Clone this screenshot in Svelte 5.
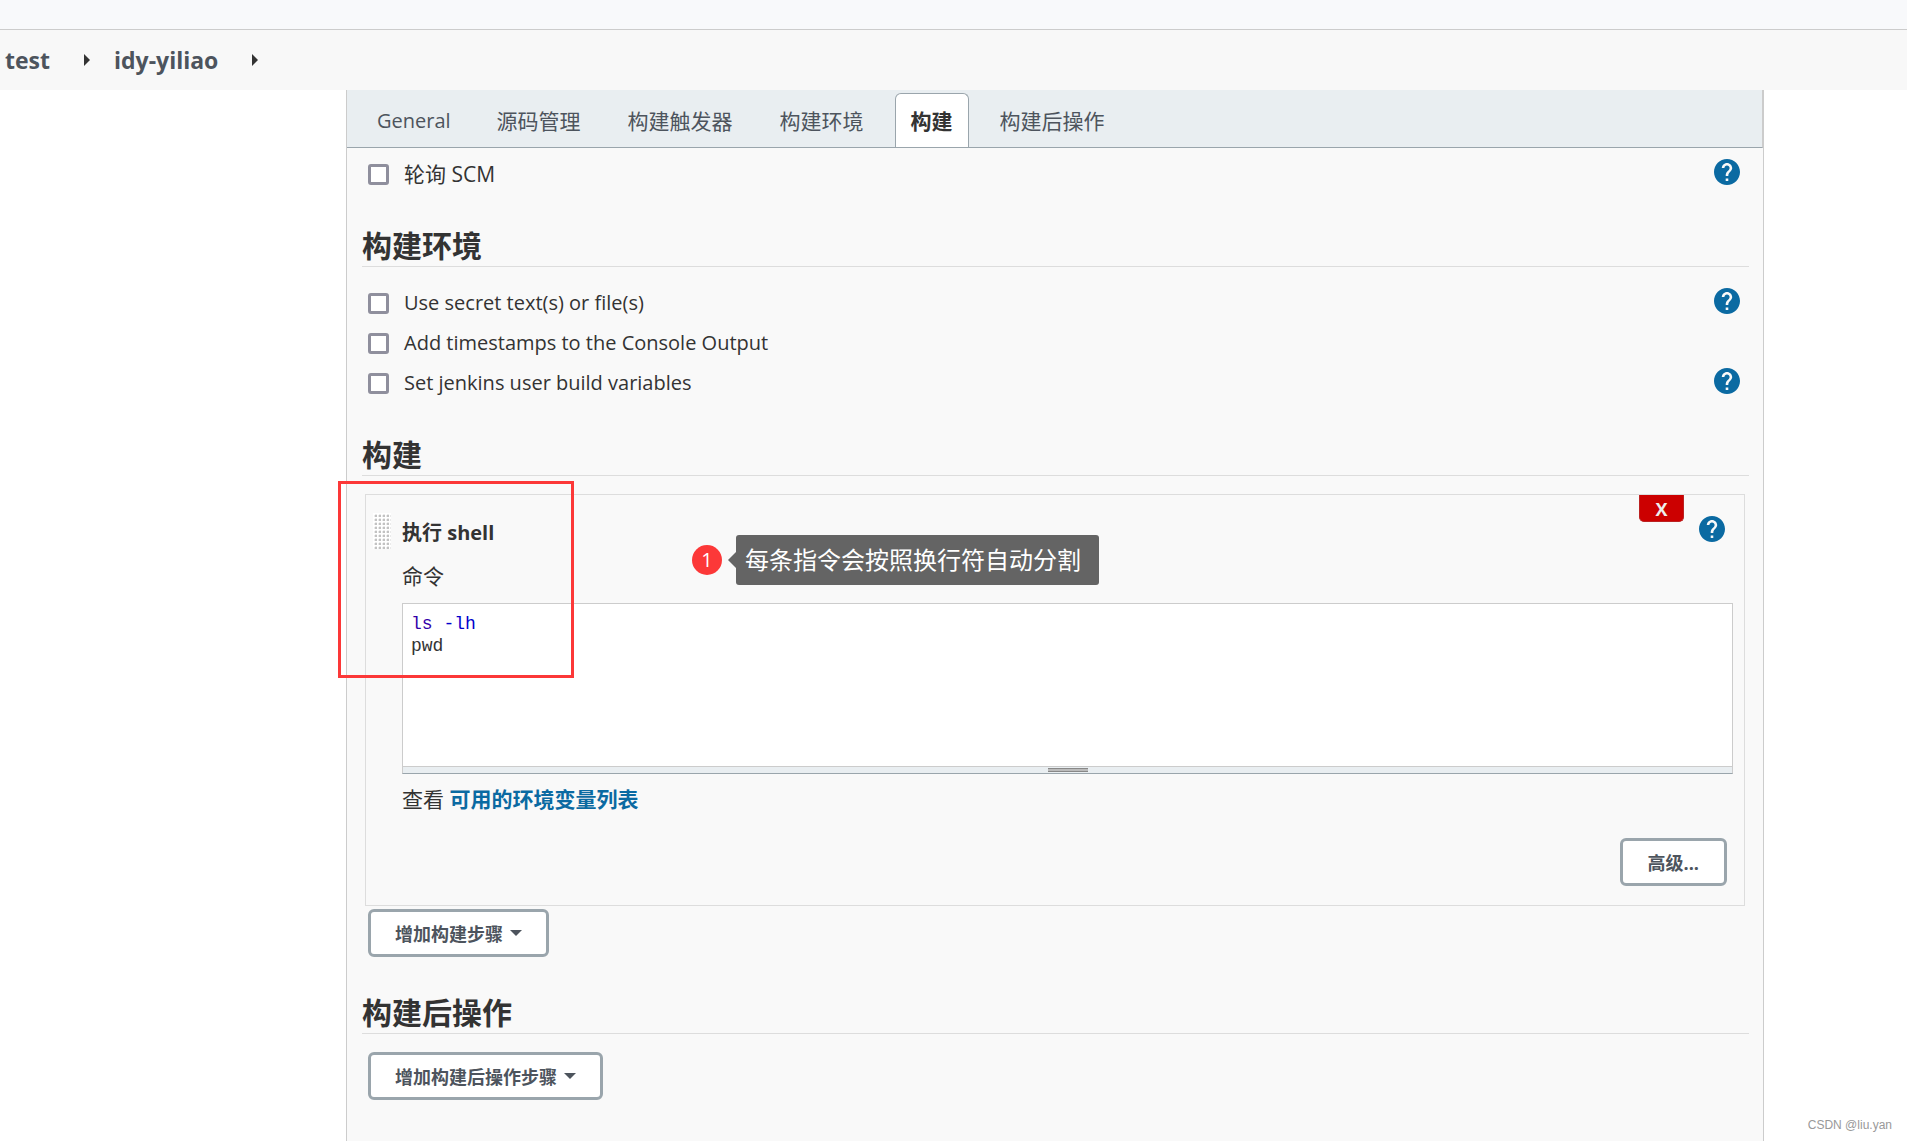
<script lang="ts">
  type Option = { id: string; label: string; help: boolean };

  const tabs = ['General', '源码管理', '构建触发器', '构建环境', '构建', '构建后操作'];
  let activeTab = $state('构建');

  const triggers: Option[] = [{ id: 'scm', label: '轮询 SCM', help: true }];

  const wrappers: Option[] = [
    { id: 'secrets', label: 'Use secret text(s) or file(s)', help: true },
    { id: 'timestamps', label: 'Add timestamps to the Console Output', help: false },
    { id: 'user-vars', label: 'Set jenkins user build variables', help: true },
  ];

  let checked: Record<string, boolean> = $state({});
  let command = $state('ls -lh\npwd');

  // splits the script into coloured tokens for the layer under the textarea
  const highlight = (text: string) =>
    text.split(/(\s+)/).map((value) => {
      if (value === 'ls') return { value, kind: 'builtin' };
      if (value.startsWith('-')) return { value, kind: 'attribute' };
      return { value, kind: 'plain' };
    });

  let tokens = $derived(highlight(command));
</script>

{#snippet helpButton(name: string)}
  <button type="button" class="help" aria-label={`Help for ${name}`}>
    <svg viewBox="2 2 20 20" width="26" height="26" aria-hidden="true">
      <path
        d="M12 2C6.48 2 2 6.48 2 12s4.48 10 10 10 10-4.48 10-10S17.52 2 12 2zm1 17h-2v-2h2v2zm2.07-7.75l-.9.92C13.45 12.9 13 13.5 13 15h-2v-.5c0-1.1.45-2.1 1.17-2.83l1.24-1.26c.37-.36.59-.86.59-1.41 0-1.1-.9-2-2-2s-2 .9-2 2H8c0-2.21 1.79-4 4-4s4 1.79 4 4c0 .88-.36 1.68-.93 2.25z"
      />
    </svg>
  </button>
{/snippet}

{#snippet optionRow(option: Option)}
  <div class="row">
    <input type="checkbox" id={option.id} bind:checked={checked[option.id]} />
    <label for={option.id}>{option.label}</label>
    {#if option.help}
      {@render helpButton(option.label)}
    {/if}
  </div>
{/snippet}

<div class="page">
  <header></header>

  <nav class="breadcrumbs">
    <a href="#test">test</a>
    <span class="arrow"></span>
    <a href="#idy-yiliao">idy-yiliao</a>
    <span class="arrow"></span>
  </nav>

  <main>
    <div class="tabBar">
      {#each tabs as tab}
        <button type="button" class="tab" class:active={activeTab === tab} onclick={() => (activeTab = tab)}>
          {tab}
        </button>
      {/each}
    </div>

    <form>
      <section class="first">
        {#each triggers as option}
          {@render optionRow(option)}
        {/each}
      </section>

      <h2>构建环境</h2>
      <section class="options">
        {#each wrappers as option}
          {@render optionRow(option)}
        {/each}
      </section>

      <h2>构建</h2>
      <section class="steps">
        <div class="step">
          <button type="button" class="delete" aria-label="Delete step">X</button>

          <div class="stepTitle">
            <span class="grip"></span>
            <b>执行 shell</b>
            {@render helpButton('执行 shell')}
          </div>

          <label class="fieldLabel" for="command">命令</label>
          <div class="editor">
            <pre aria-hidden="true">{#each tokens as token}<span class={token.kind}>{token.value}</span>{/each}</pre>
            <textarea id="command" spellcheck="false" bind:value={command}></textarea>
            <div class="resizer"><span></span></div>
          </div>

          <p class="hint">查看 <a href="#env-vars">可用的环境变量列表</a></p>

          <div class="advanced">
            <button type="button" class="btn">高级...</button>
          </div>

          <div class="marker"></div>
          <div class="callout">
            <span class="number">1</span>
            <span class="bubble">每条指令会按照换行符自动分割</span>
          </div>
        </div>

        <button type="button" class="btn menu">增加构建步骤<span class="caret"></span></button>
      </section>

      <h2>构建后操作</h2>
      <section class="steps">
        <button type="button" class="btn menu">增加构建后操作步骤<span class="caret"></span></button>
      </section>
    </form>
  </main>

  <span class="watermark">CSDN @liu.yan</span>
</div>

<style>
  :global(body) {
    background: #fff;
  }

  .page {
    position: relative;
    display: flex;
    flex-direction: column;
    min-height: 100vh;
    color: #333;
    font-family: 'Open Sans', 'Noto Sans CJK SC', sans-serif;
    font-size: 20px;
  }

  .page * {
    box-sizing: border-box;
  }

  button {
    font-family: inherit;
    cursor: pointer;
  }

  header {
    height: 30px;
    background: #f8f9fb;
    border-bottom: 1px solid #ccc;
  }

  .breadcrumbs {
    display: flex;
    align-items: center;
    height: 60px;
    padding-left: 5px;
    background: #f8f8f8;
    font-size: 23px;
    font-weight: bold;
  }

  .breadcrumbs a {
    color: #4d545d;
    text-decoration: none;
  }

  .arrow {
    margin: 0 24px 0 34px;
    border: 6px solid transparent;
    border-left-color: #333;
    border-right-width: 0;
  }

  main {
    flex: 1;
    margin: 0 143px 0 346px;
    background: #f9f9f9;
    border: solid #ccc;
    border-width: 0 1px;
  }

  .tabBar {
    display: flex;
    align-items: flex-end;
    gap: 15px;
    height: 58px;
    padding-left: 15px;
    background: #e9eef1;
    border-right: 1px solid #ccc;
    border-bottom: 1px solid #9aa5ac;
  }

  .tab {
    height: 54px;
    padding: 0 15px 2px;
    border: 1px solid transparent;
    border-bottom: 0;
    border-radius: 6px 6px 0 0;
    background: none;
    color: #4d545d;
    font-size: 21px;
  }

  .tab:first-child {
    padding: 0 14px;
    font-size: 20px;
  }

  .tab.active {
    border-color: #9aa5ac;
    background: #fff;
    color: #333;
    font-weight: bold;
  }

  form {
    padding: 0 14px 40px 15px;
  }

  .first {
    padding-top: 6px;
    font-size: 21px;
  }

  .options {
    padding-top: 16px;
  }

  .steps {
    padding: 18px 0 4px 3px;
  }

  h2 {
    display: flex;
    align-items: flex-end;
    height: 73px;
    margin: 0;
    border-bottom: 1px solid #ddd;
    font-size: 30px;
    line-height: 40px;
  }

  .row {
    display: flex;
    align-items: center;
    height: 40px;
    padding: 0 9px 0 6px;
  }

  .row input {
    appearance: none;
    width: 21px;
    height: 21px;
    margin: 0 15px 0 0;
    border: 3px solid #8f8f9d;
    border-radius: 3px;
    background: #fff;
  }

  .row input:checked {
    background: #0b6aa2;
  }

  .row label {
    line-height: 30px;
  }

  .help {
    display: flex;
    margin: 0 0 4px auto;
    padding: 0;
    border: 0;
    background: none;
  }

  .help svg {
    fill: #0b6aa2;
  }

  .step {
    position: relative;
    margin-right: 4px;
    margin-bottom: 3px;
    padding: 19px 11px 19px 36px;
    border: 1px solid #ddd;
  }

  .delete {
    position: absolute;
    top: 0;
    right: 60px;
    width: 45px;
    height: 27px;
    padding: 0;
    border: 1px solid #b22;
    border-top: 0;
    border-radius: 0 0 5px 5px;
    background: #c00;
    color: #eee;
    font-size: 18px;
    font-weight: bold;
    line-height: 28px;
  }

  .stepTitle {
    display: flex;
    align-items: center;
    height: 34px;
    margin-left: -29px;
    padding-right: 8px;
    font-size: 20px;
  }

  .grip {
    width: 18px;
    height: 36px;
    margin-right: 11px;
    background: radial-gradient(circle at 3px 3px, #aaa, #ccc 1px, #fff 2px) 0 0 / 4px 4px;
  }

  .fieldLabel {
    display: block;
    margin: 13px 0 12px;
    font-size: 21px;
    line-height: 30px;
  }

  .editor {
    display: grid;
    grid-template-rows: 162px auto;
    border: 1px solid #ccc;
    border-bottom-color: #9aa5ac;
    background: #fff;
  }

  .editor pre,
  .editor textarea {
    grid-area: 1 / 1;
    margin: 0;
    padding: 9px 8px;
    border: 0;
    font-family: 'Liberation Mono', monospace;
    font-size: 18px;
    line-height: 22px;
    white-space: pre-wrap;
  }

  .editor textarea {
    outline: 0;
    resize: none;
    background: transparent;
    color: transparent;
    caret-color: #333;
  }

  .builtin {
    color: #30a;
  }

  .attribute {
    color: #00c;
  }

  .resizer {
    display: flex;
    align-items: center;
    justify-content: center;
    height: 7px;
    border-top: 1px solid #ccc;
    background: #e9eef1;
  }

  .resizer span {
    width: 40px;
    height: 4px;
    border: solid #888;
    border-width: 1px 0;
    background: #bbb;
  }

  .hint {
    margin: 9px 0 23px;
    font-size: 21px;
    line-height: 32px;
  }

  .hint a {
    color: #0b6aa2;
    font-weight: bold;
    text-decoration: none;
  }

  .advanced {
    display: flex;
    justify-content: flex-end;
    padding-right: 6px;
  }

  .btn {
    display: flex;
    align-items: center;
    height: 48px;
    padding: 0 25px;
    border: 3px solid #9aa5ac;
    border-radius: 6px;
    background: #fff;
    color: #4d545d;
    font-size: 18px;
    font-weight: bold;
  }

  .menu {
    margin-left: 3px;
    padding: 0 24px;
  }

  .caret {
    margin-left: 7px;
    border: 6px solid transparent;
    border-top-color: #4d545d;
    border-bottom-width: 0;
  }

  .marker {
    position: absolute;
    top: -14px;
    left: -28px;
    width: 236px;
    height: 197px;
    border: 3px solid #fc3838;
    pointer-events: none;
  }

  .callout {
    position: absolute;
    top: 40px;
    left: 326px;
    display: flex;
    align-items: center;
    gap: 14px;
    color: #fff;
  }

  .number {
    width: 30px;
    border-radius: 50%;
    background: #fc3838;
    font-size: 20px;
    line-height: 30px;
    text-align: center;
  }

  .bubble {
    position: relative;
    padding: 0 18px 0 9px;
    border-radius: 3px;
    background: #646464;
    font-size: 24px;
    line-height: 50px;
    white-space: nowrap;
  }

  .bubble::before {
    content: '';
    position: absolute;
    top: 17px;
    left: -8px;
    border: 8px solid transparent;
    border-right-color: #646464;
    border-left-width: 0;
  }

  .watermark {
    position: absolute;
    right: 15px;
    bottom: 9px;
    color: #999;
    font-family: 'Liberation Sans', sans-serif;
    font-size: 12px;
    line-height: 20px;
  }
</style>
